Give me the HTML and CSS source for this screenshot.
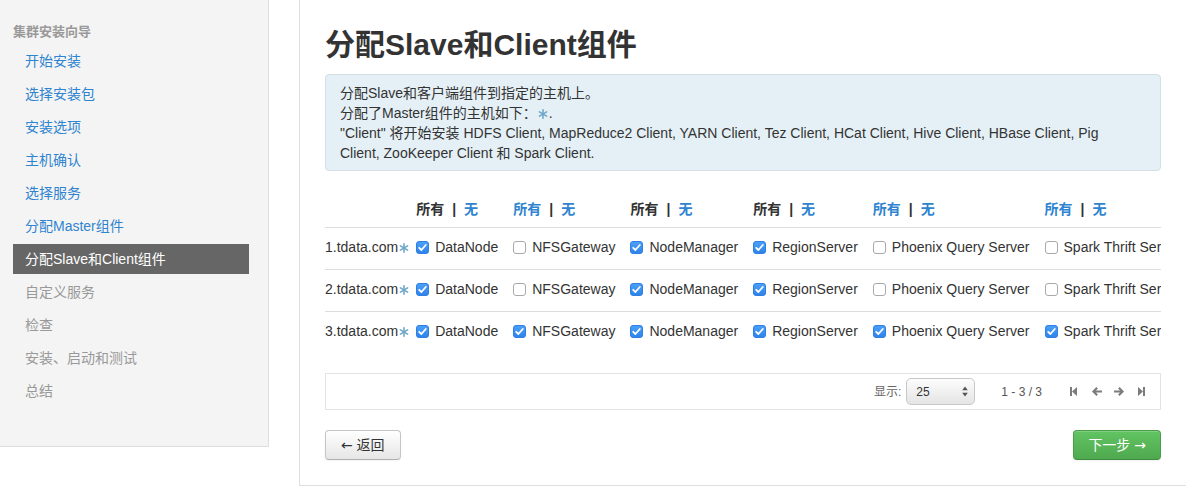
FILE: index.html
```html
<!DOCTYPE html>
<html lang="zh">
<head>
<meta charset="utf-8">
<title>分配Slave和Client组件</title>
<link rel="stylesheet" href="styles.css">
</head>
<body>
<div class="page">
  <aside class="sidebar">
    <div class="nav-header">集群安装向导</div>
    <ul class="nav">
      <li><a class="link">开始安装</a></li>
      <li><a class="link">选择安装包</a></li>
      <li><a class="link">安装选项</a></li>
      <li><a class="link">主机确认</a></li>
      <li><a class="link">选择服务</a></li>
      <li><a class="link">分配Master组件</a></li>
      <li class="active"><a>分配Slave和Client组件</a></li>
      <li class="disabled"><a>自定义服务</a></li>
      <li class="disabled"><a>检查</a></li>
      <li class="disabled"><a>安装、启动和测试</a></li>
      <li class="disabled"><a>总结</a></li>
    </ul>
  </aside>

  <main class="main">
    <h2 class="title">分配Slave和Client组件</h2>
    <div class="alert">
      分配Slave和客户端组件到指定的主机上。<br>
      分配了Master组件的主机如下：<svg class="star" viewBox="0 0 10 10"><g stroke="currentColor" stroke-width="1.6" stroke-linecap="round"><line x1="5" y1="0.8" x2="5" y2="9.2"/><line x1="1.4" y1="2.9" x2="8.6" y2="7.1"/><line x1="1.4" y1="7.1" x2="8.6" y2="2.9"/></g></svg>.<br>
      "Client" 将开始安装 HDFS Client, MapReduce2 Client, YARN Client, Tez Client, HCat Client, Hive Client, HBase Client, Pig Client, ZooKeeper Client 和 Spark Client.
    </div>

    <div class="table-wrap">
      <table class="hosts">
        <thead>
          <tr>
            <th class="host"></th>
            <th><span class="off">所有</span><span class="sep">|</span><span class="on">无</span></th>
            <th><span class="on">所有</span><span class="sep">|</span><span class="on">无</span></th>
            <th><span class="off">所有</span><span class="sep">|</span><span class="on">无</span></th>
            <th><span class="off">所有</span><span class="sep">|</span><span class="on">无</span></th>
            <th><span class="on">所有</span><span class="sep">|</span><span class="on">无</span></th>
            <th><span class="on">所有</span><span class="sep">|</span><span class="on">无</span></th>
          </tr>
        </thead>
        <tbody>
          <tr>
            <td class="host">1.tdata.com<svg class="star" viewBox="0 0 10 10"><g stroke="currentColor" stroke-width="1.6" stroke-linecap="round"><line x1="5" y1="0.8" x2="5" y2="9.2"/><line x1="1.4" y1="2.9" x2="8.6" y2="7.1"/><line x1="1.4" y1="7.1" x2="8.6" y2="2.9"/></g></svg></td>
            <td><span class="cb checked"><svg viewBox="0 0 13 13"><polyline points="3.2,6.8 5.4,9 9.8,4" /></svg></span>DataNode</td>
            <td><span class="cb"></span>NFSGateway</td>
            <td><span class="cb checked"><svg viewBox="0 0 13 13"><polyline points="3.2,6.8 5.4,9 9.8,4" /></svg></span>NodeManager</td>
            <td><span class="cb checked"><svg viewBox="0 0 13 13"><polyline points="3.2,6.8 5.4,9 9.8,4" /></svg></span>RegionServer</td>
            <td><span class="cb"></span>Phoenix Query Server</td>
            <td><span class="cb"></span>Spark Thrift Server</td>
          </tr>
          <tr>
            <td class="host">2.tdata.com<svg class="star" viewBox="0 0 10 10"><g stroke="currentColor" stroke-width="1.6" stroke-linecap="round"><line x1="5" y1="0.8" x2="5" y2="9.2"/><line x1="1.4" y1="2.9" x2="8.6" y2="7.1"/><line x1="1.4" y1="7.1" x2="8.6" y2="2.9"/></g></svg></td>
            <td><span class="cb checked"><svg viewBox="0 0 13 13"><polyline points="3.2,6.8 5.4,9 9.8,4" /></svg></span>DataNode</td>
            <td><span class="cb"></span>NFSGateway</td>
            <td><span class="cb checked"><svg viewBox="0 0 13 13"><polyline points="3.2,6.8 5.4,9 9.8,4" /></svg></span>NodeManager</td>
            <td><span class="cb checked"><svg viewBox="0 0 13 13"><polyline points="3.2,6.8 5.4,9 9.8,4" /></svg></span>RegionServer</td>
            <td><span class="cb"></span>Phoenix Query Server</td>
            <td><span class="cb"></span>Spark Thrift Server</td>
          </tr>
          <tr>
            <td class="host">3.tdata.com<svg class="star" viewBox="0 0 10 10"><g stroke="currentColor" stroke-width="1.6" stroke-linecap="round"><line x1="5" y1="0.8" x2="5" y2="9.2"/><line x1="1.4" y1="2.9" x2="8.6" y2="7.1"/><line x1="1.4" y1="7.1" x2="8.6" y2="2.9"/></g></svg></td>
            <td><span class="cb checked"><svg viewBox="0 0 13 13"><polyline points="3.2,6.8 5.4,9 9.8,4" /></svg></span>DataNode</td>
            <td><span class="cb checked"><svg viewBox="0 0 13 13"><polyline points="3.2,6.8 5.4,9 9.8,4" /></svg></span>NFSGateway</td>
            <td><span class="cb checked"><svg viewBox="0 0 13 13"><polyline points="3.2,6.8 5.4,9 9.8,4" /></svg></span>NodeManager</td>
            <td><span class="cb checked"><svg viewBox="0 0 13 13"><polyline points="3.2,6.8 5.4,9 9.8,4" /></svg></span>RegionServer</td>
            <td><span class="cb checked"><svg viewBox="0 0 13 13"><polyline points="3.2,6.8 5.4,9 9.8,4" /></svg></span>Phoenix Query Server</td>
            <td><span class="cb checked"><svg viewBox="0 0 13 13"><polyline points="3.2,6.8 5.4,9 9.8,4" /></svg></span>Spark Thrift Server</td>
          </tr>
        </tbody>
      </table>
    </div>

    <div class="pager">
      <span class="pager-label">显示:</span>
      <div class="select">
        <span>25</span>
        <svg class="updown" viewBox="0 0 6 11"><polygon points="3,0.5 5.8,4.3 0.2,4.3" /><polygon points="0.2,6.7 5.8,6.7 3,10.5" /></svg>
      </div>
      <span class="pager-info">1 - 3 / 3</span>
      <div class="pager-icons">
        <svg class="pi first" viewBox="0 0 7 9"><rect x="0" y="0" width="2" height="9"/><polygon points="7,0 7,9 2,4.5"/></svg>
        <svg class="pi prev" viewBox="0 0 10 9"><path d="M0 4.5 L4.4 0 L5.9 1.5 L4 3.4 H10 V5.6 H4 L5.9 7.5 L4.4 9 Z"/></svg>
        <svg class="pi next" viewBox="0 0 10 9"><path d="M10 4.5 L5.6 0 L4.1 1.5 L6 3.4 H0 V5.6 H6 L4.1 7.5 L5.6 9 Z"/></svg>
        <svg class="pi last" viewBox="0 0 7 9"><rect x="5" y="0" width="2" height="9"/><polygon points="0,0 0,9 5,4.5"/></svg>
      </div>
    </div>

    <div class="actions">
      <button class="btn"><span class="arrow">←</span> 返回</button>
      <button class="btn btn-success">下一步 <span class="arrow">→</span></button>
    </div>
  </main>
</div>
</body>
</html>
```

FILE: styles.css
```css
* { box-sizing: border-box; }

html, body {
  margin: 0;
  padding: 0;
  background: #fff;
}

body {
  font-family: "Liberation Sans", "Noto Sans CJK SC", sans-serif;
  font-size: 14px;
  line-height: 20px;
  color: #333;
  overflow: hidden;
}

.page {
  display: flex;
  align-items: flex-start;
  width: 1186px;
}

/* Sidebar */
.sidebar {
  width: 269px;
  flex: none;
  background: #f4f4f4;
  border-right: 1px solid #dedede;
  border-bottom: 1px solid #dedede;
  padding: 22px 0 37px 0;
}

.nav-header {
  padding-left: 13px;
  font-size: 13px;
  font-weight: bold;
  color: #999;
  line-height: 20px;
  margin-bottom: 4px;
}

.nav {
  list-style: none;
  margin: 0 0 0 13px;
  padding: 0;
  width: 236px;
}

.nav li {
  margin-bottom: 3px;
}

.nav li a {
  display: block;
  padding: 5px 12px;
  line-height: 20px;
  font-size: 14px;
}

.nav .link { color: #2f84d0; }
.nav .active a { background: #666; color: #fff; }
.nav .disabled a { color: #999; }

/* Main */
.main {
  flex: 1;
  min-width: 0;
  margin-left: 30px;
  border-left: 1px solid #dedede;
  border-bottom: 1px solid #dedede;
  padding: 25px 25px 25px 25px;
}

.title {
  margin: 0 0 9px 0;
  font-size: 30px;
  line-height: 40px;
  font-weight: bold;
  color: #333;
}

.alert {
  background: #e5f0f6;
  border: 1px solid #d3dfe6;
  border-radius: 4px;
  padding: 8px 35px 7px 14px;
  line-height: 20px;
  color: #333;
}

.star {
  display: inline-block;
  width: 10px;
  height: 10px;
  color: #6fa7c9;
  vertical-align: -1px;
  margin: 0 1px;
}

/* Table */
.table-wrap {
  margin-top: 20px;
  overflow: hidden;
  width: 100%;
}

.hosts {
  border-collapse: collapse;
  white-space: nowrap;
}

.hosts th {
  text-align: left;
  font-weight: bold;
  padding: 8px 15px 8px 0;
  line-height: 20px;
}

.hosts th.host { padding-right: 7px; }

.hosts td {
  border-top: 1px solid #dddddd;
  padding: 9px 15px 12px 0;
  line-height: 20px;
}

.hosts td.host {
  padding-right: 7px;
}

.hosts td.host .star {
  margin: 0 0 0 1px;
}

.off { color: #333; }
.on { color: #2f84d0; }
.sep {
  color: #333;
  margin: 0 8px;
}

.cb {
  display: inline-block;
  width: 13px;
  height: 13px;
  border: 1px solid #a9a9a9;
  border-radius: 3px;
  background: #fff;
  vertical-align: -2px;
  margin-right: 6px;
  position: relative;
}

.cb.checked {
  background: linear-gradient(#4aa0f8, #2f83ea);
  border-color: #2e7fe0;
}

.cb svg {
  position: absolute;
  left: -1px;
  top: -1px;
  width: 13px;
  height: 13px;
  fill: none;
  stroke: #fff;
  stroke-width: 1.8;
  stroke-linecap: round;
  stroke-linejoin: round;
}

/* Pager */
.pager {
  margin-top: 20px;
  border: 1px solid #e3e3e3;
  height: 37px;
  display: flex;
  align-items: center;
  justify-content: flex-end;
  padding-right: 15px;
  font-size: 12px;
  color: #666;
}

.pager-label { color: #666; }

.select {
  margin-left: 5px;
  width: 69px;
  height: 27px;
  border: 1px solid #c8c8c8;
  border-radius: 5px;
  background: linear-gradient(#fdfdfd, #e4e4e4);
  display: flex;
  align-items: center;
  justify-content: space-between;
  padding: 0 6px 0 9px;
  color: #333;
  font-size: 12px;
}

.updown {
  width: 6px;
  height: 11px;
  fill: #555;
}

.pager-info {
  margin-left: 26px;
  color: #555;
}

.pager-icons {
  margin-left: 28px;
  display: flex;
  align-items: center;
  fill: #7c7c7c;
}

.pi { height: 9px; }
.pi.first { width: 7px; }
.pi.prev { width: 10px; margin-left: 15px; }
.pi.next { width: 10px; margin-left: 12px; }
.pi.last { width: 7px; margin-left: 14px; }

/* Buttons */
.actions {
  margin-top: 20px;
  display: flex;
  justify-content: space-between;
}

.btn {
  font-family: "Liberation Sans", "Noto Sans CJK SC", sans-serif;
  font-size: 14px;
  line-height: 20px;
  height: 30px;
  padding: 4px 15px;
  border: 1px solid #c5c5c5;
  border-bottom-color: #b0b0b0;
  border-radius: 4px;
  background: linear-gradient(#ffffff, #e6e6e6);
  color: #333;
  box-shadow: inset 0 1px 0 rgba(255,255,255,.2), 0 1px 2px rgba(0,0,0,.05);
}

.btn .arrow {
  font-family: "DejaVu Sans", sans-serif;
  font-size: 14px;
}

.btn-success {
  background: linear-gradient(#62c462, #4fa94f);
  border-color: #4a9e4a;
  border-bottom-color: #3f8a3f;
  color: #fff;
  padding: 4px 14px;
}
```
